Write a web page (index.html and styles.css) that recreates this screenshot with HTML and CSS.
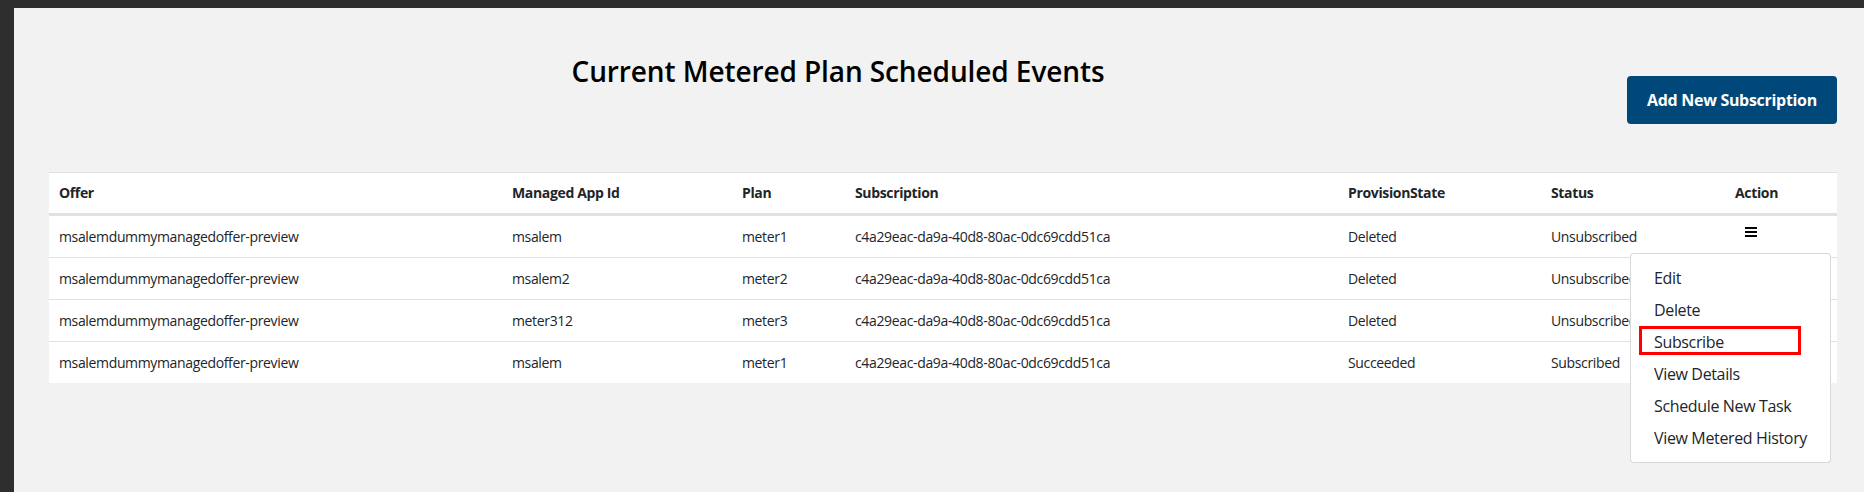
FILE: index.html
```html
<!DOCTYPE html>
<html lang="en">
<head>
<meta charset="utf-8">
<title>Current Metered Plan Scheduled Events</title>
<link rel="stylesheet" href="styles.css">
</head>
<body>
<div class="page">
  <div class="header">
    <h1 class="title">Current Metered Plan Scheduled Events</h1>
    <button class="btn-primary" type="button">Add New Subscription</button>
  </div>
  <div class="table-wrap">
    <table class="grid">
      <colgroup>
        <col class="c-offer"><col class="c-app"><col class="c-plan"><col class="c-sub"><col class="c-prov"><col class="c-status"><col class="c-action">
      </colgroup>
      <thead>
        <tr><th>Offer</th><th>Managed App Id</th><th>Plan</th><th>Subscription</th><th>ProvisionState</th><th>Status</th><th>Action</th></tr>
      </thead>
      <tbody>
        <tr><td>msalemdummymanagedoffer-preview</td><td>msalem</td><td>meter1</td><td>c4a29eac-da9a-40d8-80ac-0dc69cdd51ca</td><td>Deleted</td><td>Unsubscribed</td><td><span class="menu-icon"><svg width="12" height="10" viewBox="0 0 12 10"><rect x="0" y="0" width="12" height="2"/><rect x="0" y="4" width="12" height="2"/><rect x="0" y="8" width="12" height="2"/></svg></span></td></tr>
        <tr><td>msalemdummymanagedoffer-preview</td><td>msalem2</td><td>meter2</td><td>c4a29eac-da9a-40d8-80ac-0dc69cdd51ca</td><td>Deleted</td><td>Unsubscribed</td><td></td></tr>
        <tr><td>msalemdummymanagedoffer-preview</td><td>meter312</td><td>meter3</td><td>c4a29eac-da9a-40d8-80ac-0dc69cdd51ca</td><td>Deleted</td><td>Unsubscribed</td><td></td></tr>
        <tr><td>msalemdummymanagedoffer-preview</td><td>msalem</td><td>meter1</td><td>c4a29eac-da9a-40d8-80ac-0dc69cdd51ca</td><td>Succeeded</td><td>Subscribed</td><td></td></tr>
      </tbody>
    </table>
    <ul class="dropdown">
      <li class="item">Edit</li>
      <li class="item">Delete</li>
      <li class="item item-marked">Subscribe</li>
      <li class="item">View Details</li>
      <li class="item">Schedule New Task</li>
      <li class="item">View Metered History</li>
    </ul>
  </div>
</div>
</body>
</html>
```
FILE: styles.css
```css
html, body {
  margin: 0;
  padding: 0;
  height: 100%;
}
body {
  background: #2e2e2e;
  padding: 8px 0 0 14px;
  box-sizing: border-box;
  font-family: "Open Sans", "Noto Sans", "Liberation Sans", sans-serif;
  color: #212529;
  overflow: hidden;
}
.page {
  background: #f2f2f2;
  height: 100%;
  box-sizing: border-box;
  padding: 43px 27px 0 35px;
}
.header {
  display: flex;
  align-items: flex-start;
}
.title {
  flex: 1;
  margin: 0;
  text-align: center;
  font-size: 28px;
  line-height: 40px;
  font-weight: 600;
  color: #000;
  letter-spacing: -0.1px;
}
.btn-primary {
  margin-top: 25px;
  width: 210px;
  height: 48px;
  background: #00477a;
  color: #fff;
  border: 0;
  border-radius: 4px;
  font-family: inherit;
  font-weight: 700;
  font-size: 16px;
  letter-spacing: -0.3px;
  padding: 0;
}
.table-wrap {
  position: relative;
  margin-top: 48px;
}
.grid {
  width: 100%;
  border-collapse: separate;
  border-spacing: 0;
  table-layout: fixed;
  background: #fff;
  font-size: 14px;
  letter-spacing: -0.35px;
}
.c-offer { width: 453px; }
.c-app { width: 230px; }
.c-plan { width: 113px; }
.c-sub { width: 493px; }
.c-prov { width: 203px; }
.c-status { width: 184px; }
.c-action { width: 112px; }
.grid th {
  text-align: left;
  font-weight: 700;
  padding: 10px 10px;
  line-height: 20px;
  border-top: 1px solid #dee2e6;
  border-bottom: 2px solid #dee2e6;
  white-space: nowrap;
}
.grid td {
  padding: 10px 10px;
  line-height: 21px;
  border-top: 1px solid #dee2e6;
  white-space: nowrap;
}
.menu-icon {
  display: inline-block;
  margin-left: 10px;
  vertical-align: top;
  margin-top: 1px;
}
.menu-icon svg {
  display: block;
  fill: #000;
}
.dropdown {
  position: absolute;
  top: 81px;
  right: 6px;
  width: 201px;
  box-sizing: border-box;
  margin: 0;
  padding: 8px 0;
  list-style: none;
  background: #fff;
  border: 1px solid rgba(0, 0, 0, 0.15);
  border-radius: 4px;
}
.item {
  position: relative;
  padding: 4px 23px;
  font-size: 16px;
  line-height: 24px;
  letter-spacing: -0.35px;
  color: #212529;
  white-space: nowrap;
}
.item-marked::after {
  content: "";
  position: absolute;
  left: 8px;
  top: 0;
  width: 162px;
  height: 29px;
  box-sizing: border-box;
  border: 3px solid #ff0000;
}
```
